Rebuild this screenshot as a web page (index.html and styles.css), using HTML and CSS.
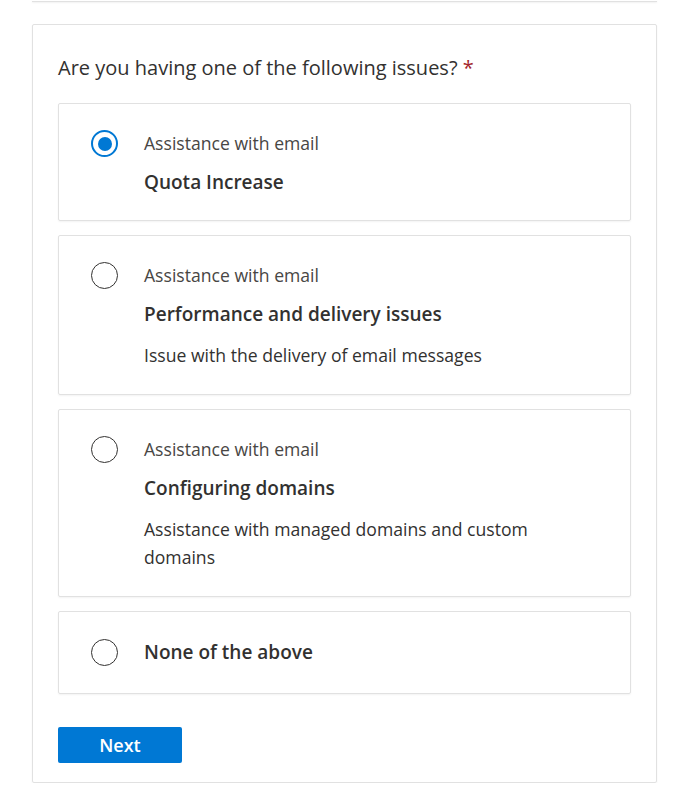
FILE: index.html
```html
<!DOCTYPE html>
<html lang="en">
<head>
    <meta charset="UTF-8">
    <meta name="viewport" content="width=device-width, initial-scale=1.0">
    <title>Support - Select an issue</title>
    <link rel="stylesheet" href="styles.css">
</head>
<body>
    <!-- bottom edge of the previous step, scrolled above -->
    <div class="card-edge"></div>

    <form class="step-card" id="issue-form">
        <p class="question">Are you having one of the following issues? <span class="required">*</span></p>

        <div class="options">
            <label class="option">
                <input type="radio" name="issue" value="quota" checked>
                <span class="radio"></span>
                <span class="option-text">
                    <span class="option-category">Assistance with email</span>
                    <span class="option-title">Quota Increase</span>
                </span>
            </label>

            <label class="option">
                <input type="radio" name="issue" value="delivery">
                <span class="radio"></span>
                <span class="option-text">
                    <span class="option-category">Assistance with email</span>
                    <span class="option-title">Performance and delivery issues</span>
                    <span class="option-desc">Issue with the delivery of email messages</span>
                </span>
            </label>

            <label class="option">
                <input type="radio" name="issue" value="domains">
                <span class="radio"></span>
                <span class="option-text">
                    <span class="option-category">Assistance with email</span>
                    <span class="option-title">Configuring domains</span>
                    <span class="option-desc">Assistance with managed domains and custom domains</span>
                </span>
            </label>

            <label class="option option-plain">
                <input type="radio" name="issue" value="none">
                <span class="radio"></span>
                <span class="option-text">
                    <span class="option-title">None of the above</span>
                </span>
            </label>
        </div>

        <button type="submit" class="next-button">Next</button>
    </form>
</body>
</html>
```

FILE: styles.css
```css
/* Common styles */
body {
    font-family: "Open Sans", "Noto Sans", Arial, sans-serif;
    background-color: #fff;
    color: #323130;
    margin: 0;
    padding: 0;
}

/* Previous step card (only its bottom edge shows) */
.card-edge {
    margin: 0 26px 0 32px;
    height: 1px;
    border-bottom: 1px solid #e1e1e1;
    box-shadow: 0 1px 2px rgba(0, 0, 0, 0.06);
}

/* Step card */
.step-card {
    margin: 22px 26px 0 32px;
    padding: 30px 25px 19px 25px;
    border: 1px solid #e1e1e1;
    border-radius: 2px;
    box-shadow: 0 1px 2px rgba(0, 0, 0, 0.06);
}

.question {
    margin: 0 0 22px 0;
    font-size: 20px;
    line-height: 26px;
    color: #323130;
}

.required {
    color: #a4262c;
}

/* Option list */
.options {
    display: flex;
    flex-direction: column;
    gap: 14px;
}

.option {
    display: flex;
    align-items: flex-start;
    padding: 27px 20px 25px 32px;
    border: 1px solid #e1e1e1;
    border-radius: 2px;
    box-shadow: 0 1px 2px rgba(0, 0, 0, 0.05);
    cursor: pointer;
}

.option-plain {
    padding-bottom: 27px;
}

.option input {
    display: none;
}

/* Custom radio circle */
.radio {
    flex: none;
    box-sizing: border-box;
    width: 27px;
    height: 27px;
    margin-top: -1px;
    margin-right: 26px;
    border: 1.5px solid #323130;
    border-radius: 50%;
    position: relative;
}

.option-plain .radio {
    margin-top: 0;
}

.option input:checked + .radio {
    border: 2px solid #0078d4;
}

.option input:checked + .radio::after {
    content: "";
    position: absolute;
    top: 4.5px;
    left: 4.5px;
    width: 14px;
    height: 14px;
    border-radius: 50%;
    background-color: #0078d4;
}

.option-text {
    display: flex;
    flex-direction: column;
    gap: 14px;
}

.option-category {
    font-size: 17.6px;
    line-height: 24px;
    color: #484644;
}

.option-title {
    font-size: 19px;
    line-height: 26px;
    font-weight: 600;
    color: #323130;
}

.option-desc {
    font-size: 17.6px;
    line-height: 28px;
    color: #323130;
    max-width: 420px;
}

/* Next button */
.next-button {
    margin-top: 33px;
    width: 124px;
    height: 36px;
    border: none;
    border-radius: 2px;
    background-color: #0078d4;
    color: #fff;
    font-family: inherit;
    font-size: 18px;
    font-weight: 600;
    cursor: pointer;
}
```
